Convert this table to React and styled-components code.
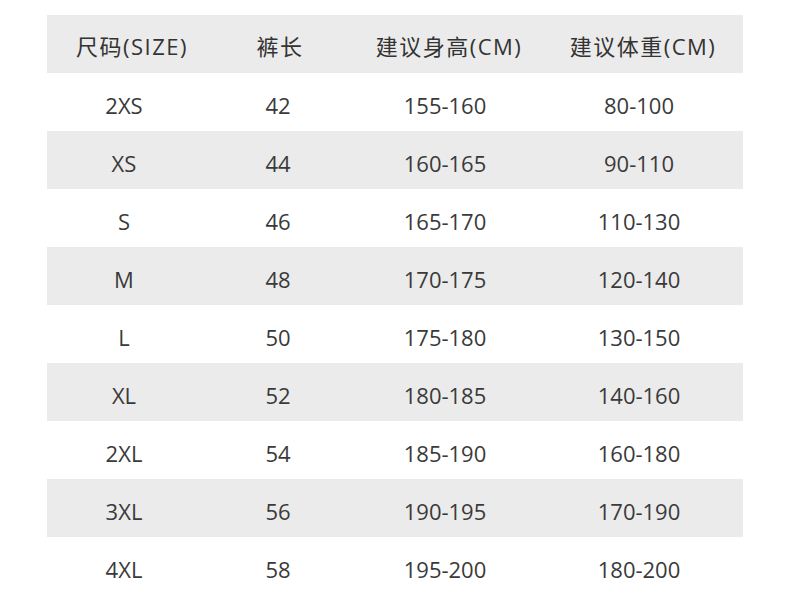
import React from "react";
import styled, { createGlobalStyle } from "styled-components";

const Global = createGlobalStyle`
  html, body { margin: 0; padding: 0; background: #ffffff; }
  body { font-family: "Open Sans", "Noto Sans CJK SC", sans-serif; overflow: hidden; }
`;

const Page = styled.div`
  width: 790px;
  height: 594px;
  box-sizing: border-box;
  padding: 15px 47px 0 47px;
  overflow: hidden;
`;

const Table = styled.div`
  width: 696px;
  display: flex;
  flex-direction: column;
`;

const Row = styled.div`
  display: grid;
  grid-template-columns: 154px 154px 180px 208px;
  height: 58px;
  background: ${(p) => (p.$shaded ? "#ebebeb" : "#ffffff")};
`;

const Cell = styled.div`
  box-sizing: border-box;
  height: 58px;
  padding-top: 6px;
  line-height: 52px;
  text-align: center;
  font-size: 22px;
  color: #3a3a3a;
  white-space: nowrap;
  font-family: "Open Sans", "Noto Sans CJK SC", sans-serif;
`;

const HeadCell = styled(Cell)`
  padding-top: 4px;
  line-height: 54px;
  letter-spacing: 1.5px;
  padding-left: ${(p) => p.$shift || 0}px;
  color: #333333;
`;

const headers = [
  { t: "尺码(SIZE)", s: 16 },
  { t: "裤长", s: 4 },
  { t: "建议身高(CM)", s: 8 },
  { t: "建议体重(CM)", s: 8 },
];

const rows = [
  ["2XS", "42", "155-160", "80-100"],
  ["XS", "44", "160-165", "90-110"],
  ["S", "46", "165-170", "110-130"],
  ["M", "48", "170-175", "120-140"],
  ["L", "50", "175-180", "130-150"],
  ["XL", "52", "180-185", "140-160"],
  ["2XL", "54", "185-190", "160-180"],
  ["3XL", "56", "190-195", "170-190"],
  ["4XL", "58", "195-200", "180-200"],
];

export default function App() {
  return (
    <>
      <Global />
      <Page>
        <Table>
          <Row $shaded>
            {headers.map((h) => (
              <HeadCell key={h.t} $shift={h.s}>
                {h.t}
              </HeadCell>
            ))}
          </Row>
          {rows.map((r, i) => (
            <Row key={r[0]} $shaded={i % 2 === 1}>
              {r.map((c, j) => (
                <Cell key={j}>{c}</Cell>
              ))}
            </Row>
          ))}
        </Table>
      </Page>
    </>
  );
}
